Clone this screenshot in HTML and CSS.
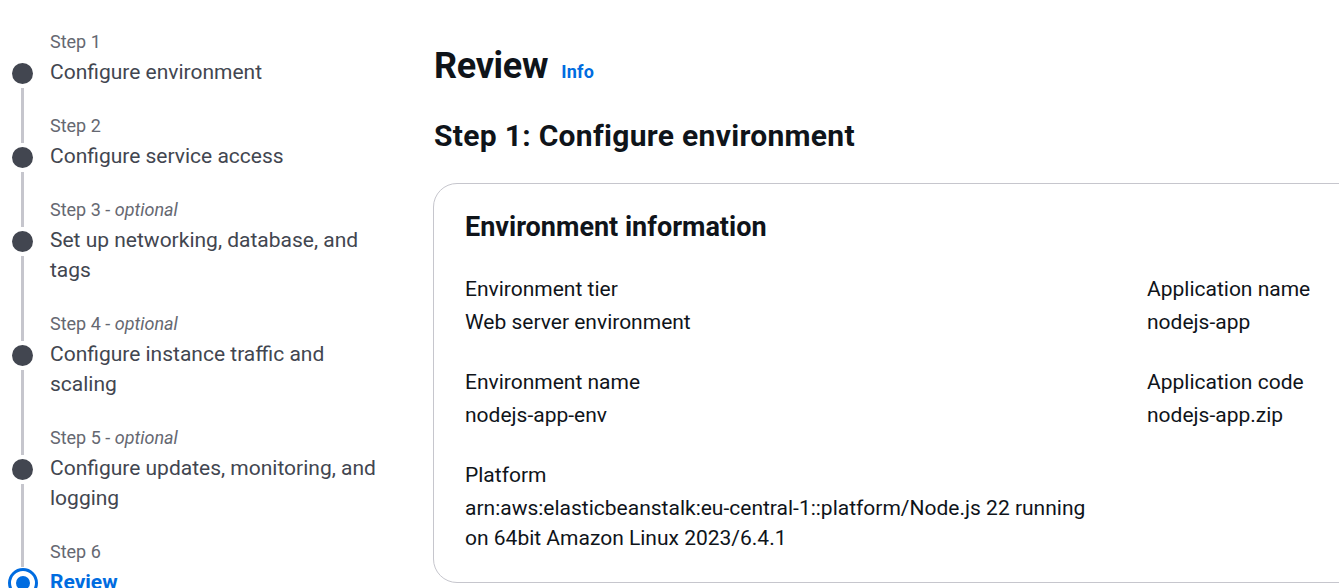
FILE: index.html
```html
<!DOCTYPE html>
<html lang="en">
<head>
<meta charset="utf-8">
<title>Review</title>
<link rel="stylesheet" href="styles.css">
</head>
<body>
<div class="page">
  <nav class="wizard-nav">
    <ol class="steps">
      <li class="step first">
        <div class="rail-top"></div>
        <div class="step-label">Step 1</div>
        <div class="rail"><span class="dot"></span><span class="line"></span></div>
        <div class="step-title">Configure environment</div>
      </li>
      <li class="step">
        <div class="rail-top"><span class="line"></span></div>
        <div class="step-label">Step 2</div>
        <div class="rail"><span class="stub"></span><span class="dot"></span><span class="line"></span></div>
        <div class="step-title">Configure service access</div>
      </li>
      <li class="step">
        <div class="rail-top"><span class="line"></span></div>
        <div class="step-label">Step 3 - <i>optional</i></div>
        <div class="rail"><span class="stub"></span><span class="dot"></span><span class="line"></span></div>
        <div class="step-title">Set up networking, database, and tags</div>
      </li>
      <li class="step">
        <div class="rail-top"><span class="line"></span></div>
        <div class="step-label">Step 4 - <i>optional</i></div>
        <div class="rail"><span class="stub"></span><span class="dot"></span><span class="line"></span></div>
        <div class="step-title">Configure instance traffic and scaling</div>
      </li>
      <li class="step">
        <div class="rail-top"><span class="line"></span></div>
        <div class="step-label">Step 5 - <i>optional</i></div>
        <div class="rail"><span class="stub"></span><span class="dot"></span><span class="line"></span></div>
        <div class="step-title">Configure updates, monitoring, and logging</div>
      </li>
      <li class="step active">
        <div class="rail-top"><span class="line"></span></div>
        <div class="step-label">Step 6</div>
        <div class="rail"><span class="ring"><span class="ring-dot"></span></span></div>
        <div class="step-title">Review</div>
      </li>
    </ol>
  </nav>

  <main class="main">
    <div class="page-header">
      <h1 class="h1">Review</h1>
      <a class="info-link" href="#">Info</a>
    </div>
    <h2 class="h2">Step 1: Configure environment</h2>

    <section class="card">
      <h3 class="h3">Environment information</h3>
      <div class="kv-grid">
        <div class="kv-col">
          <div class="kv">
            <div class="kv-label">Environment tier</div>
            <div class="kv-value">Web server environment</div>
          </div>
          <div class="kv">
            <div class="kv-label">Environment name</div>
            <div class="kv-value">nodejs-app-env</div>
          </div>
          <div class="kv">
            <div class="kv-label">Platform</div>
            <div class="kv-value">arn:aws:elasticbeanstalk:eu-central-1::platform/Node.js 22 running on 64bit Amazon Linux 2023/6.4.1</div>
          </div>
        </div>
        <div class="kv-col">
          <div class="kv">
            <div class="kv-label">Application name</div>
            <div class="kv-value">nodejs-app</div>
          </div>
          <div class="kv">
            <div class="kv-label">Application code</div>
            <div class="kv-value">nodejs-app.zip</div>
          </div>
        </div>
      </div>
    </section>
  </main>
</div>
</body>
</html>
```

FILE: styles.css
```css
html, body {
  margin: 0;
  padding: 0;
  background: #ffffff;
  overflow: hidden;
}

body {
  font-family: Roboto, "Liberation Sans", Arial, sans-serif;
  color: #0f141a;
  -webkit-font-smoothing: antialiased;
}

.page {
  display: flex;
  align-items: flex-start;
  width: 2200px;
}

/* ---------- wizard navigation ---------- */
.wizard-nav {
  width: 434px;
  flex: none;
  padding-top: 30px;
}

.steps {
  list-style: none;
  margin: 0;
  padding: 0;
}

.step {
  display: grid;
  grid-template-columns: 45px 340px;
  column-gap: 5px;
}

.rail-top {
  display: flex;
  justify-content: center;
}

.rail-top .line {
  width: 3px;
  background: #c6c6cd;
}

.step-label {
  font-size: 18px;
  line-height: 24px;
  color: #656871;
  padding-bottom: 3px;
}

.step-label i {
  font-style: italic;
}

.rail {
  display: flex;
  flex-direction: column;
  align-items: center;
}

.rail .stub {
  width: 3px;
  height: 2px;
  background: #c6c6cd;
}

.dot {
  width: 21px;
  height: 21px;
  border-radius: 50%;
  background: #424650;
  margin-top: 6px;
  flex: none;
}

.rail .stub + .dot {
  margin-top: 4px;
}

.rail .line {
  flex: 1;
  width: 3px;
  margin-top: 4px;
  background: #c6c6cd;
}

.step-title {
  font-size: 21px;
  line-height: 30px;
  color: #424650;
  padding-bottom: 27px;
}

.step.active .step-title {
  color: #006ce0;
  font-weight: 700;
}

.ring {
  box-sizing: border-box;
  width: 30px;
  height: 30px;
  margin-top: 1px;
  border-radius: 50%;
  border: 3.5px solid #006ce0;
  display: flex;
  align-items: center;
  justify-content: center;
  flex: none;
}

.ring-dot {
  width: 14px;
  height: 14px;
  border-radius: 50%;
  background: #006ce0;
}

/* ---------- main ---------- */
.main {
  flex: none;
  width: 1700px;
  padding-top: 42px;
}

.page-header {
  display: flex;
  align-items: baseline;
  gap: 13px;
}

.h1 {
  margin: 0;
  font-size: 36px;
  line-height: 48px;
  font-weight: 700;
  color: #0f141a;
  letter-spacing: -0.3px;
}

.info-link {
  font-size: 18px;
  line-height: 24px;
  font-weight: 700;
  color: #006ce0;
  text-decoration: none;
  letter-spacing: 0.3px;
}

.h2 {
  margin: 0;
  padding-top: 28px;
  font-size: 30px;
  line-height: 36px;
  font-weight: 700;
  color: #0f141a;
  letter-spacing: 0.3px;
}

.card {
  margin-top: 29px;
  margin-left: -1px;
  box-sizing: border-box;
  width: 1500px;
  border: 1px solid #c6c6cd;
  border-radius: 24px;
  padding: 27px 32px 29px 31px;
}

.h3 {
  margin: 0;
  font-size: 27px;
  line-height: 33px;
  font-weight: 700;
  color: #0f141a;
}

.kv-grid {
  margin-top: 30px;
  display: grid;
  grid-template-columns: 635px 635px;
  column-gap: 47px;
}

.kv-col {
  display: flex;
  flex-direction: column;
  gap: 30px;
}

.kv-label {
  font-size: 21px;
  line-height: 30px;
  color: #0f141a;
  margin-bottom: 3px;
}

.kv-value {
  font-size: 21px;
  line-height: 30px;
  color: #0f141a;
}
```
